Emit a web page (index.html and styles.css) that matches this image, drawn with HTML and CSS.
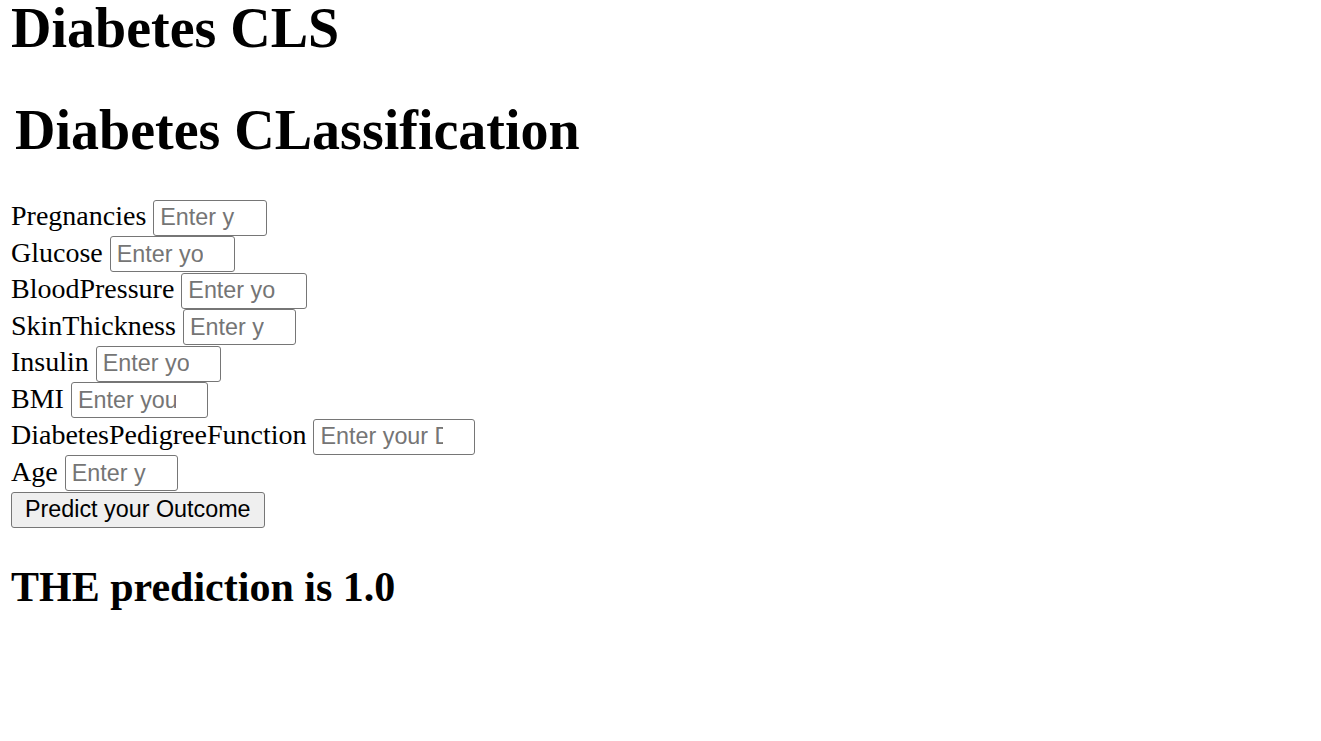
FILE: index.html
```html
<!DOCTYPE html>
<html lang="en">
<head>
<meta charset="utf-8">
<title>Diabetes CLS</title>
<link rel="stylesheet" href="styles.css">
</head>
<body>
<h1 class="brand">Diabetes CLS</h1>
<h1 class="title">Diabetes CLassification</h1>
<form class="form">
  <div class="row"><label>Pregnancies</label><input class="field w-preg" type="text" placeholder="Enter your Pregnancies"></div>
  <div class="row"><label>Glucose</label><input class="field w-gluc" type="text" placeholder="Enter your Glucose"></div>
  <div class="row"><label>BloodPressure</label><input class="field w-bp" type="text" placeholder="Enter your BloodPressure"></div>
  <div class="row"><label>SkinThickness</label><input class="field w-skin" type="text" placeholder="Enter your SkinThickness"></div>
  <div class="row"><label>Insulin</label><input class="field w-ins" type="text" placeholder="Enter your Insulin"></div>
  <div class="row"><label>BMI</label><input class="field w-bmi" type="text" placeholder="Enter your BMI"></div>
  <div class="row"><label>DiabetesPedigreeFunction</label><input class="field w-dpf" type="text" placeholder="Enter your DiabetesPedigreeFunction"></div>
  <div class="row"><label>Age</label><input class="field w-age" type="text" placeholder="Enter your Age"></div>
  <button class="submit" type="button">Predict your Outcome</button>
</form>
<h2 class="result">THE prediction is 1.0</h2>
</body>
</html>
```
FILE: styles.css
```css
html, body {
  background: #ffffff;
}
body {
  margin: 0;
  padding: 0 0 0 11px;
  font-family: "Liberation Serif", "Times New Roman", serif;
  font-size: 28px;
  color: #000000;
}
.brand {
  font-size: 56px;
  font-weight: bold;
  line-height: 56px;
  margin: 0 0 42px 0;
}
.title {
  font-size: 56px;
  font-weight: bold;
  margin: 0 0 37.5px 0;
  padding-left: 4px;
}
.form {
  display: flex;
  flex-direction: column;
  align-items: flex-start;
}
.row {
  display: flex;
  align-items: baseline;
  gap: 7px;
  height: 36.5px;
}
.field {
  box-sizing: border-box;
  height: 36px;
  margin: 0;
  padding: 0 31px 0 6px;
  border: 1px solid #767676;
  border-radius: 3px;
  font-family: "Liberation Sans", Arial, sans-serif;
  font-size: 23.33px;
  color: #000000;
  background: #ffffff;
}
.field::placeholder {
  color: #757575;
}
.w-preg { width: 114px; }
.w-gluc { width: 125px; }
.w-bp { width: 126px; }
.w-skin { width: 113px; }
.w-ins { width: 125px; }
.w-bmi { width: 137px; }
.w-dpf { width: 162px; }
.w-age { width: 113px; }
.submit {
  box-sizing: border-box;
  height: 36px;
  margin: 0;
  padding: 0 13px;
  border: 1px solid #767676;
  border-radius: 3px;
  background: #efefef;
  font-family: "Liberation Sans", Arial, sans-serif;
  font-size: 23.33px;
  color: #000000;
}
.result {
  font-size: 42px;
  font-weight: bold;
  margin: 35px 0;
}
```
